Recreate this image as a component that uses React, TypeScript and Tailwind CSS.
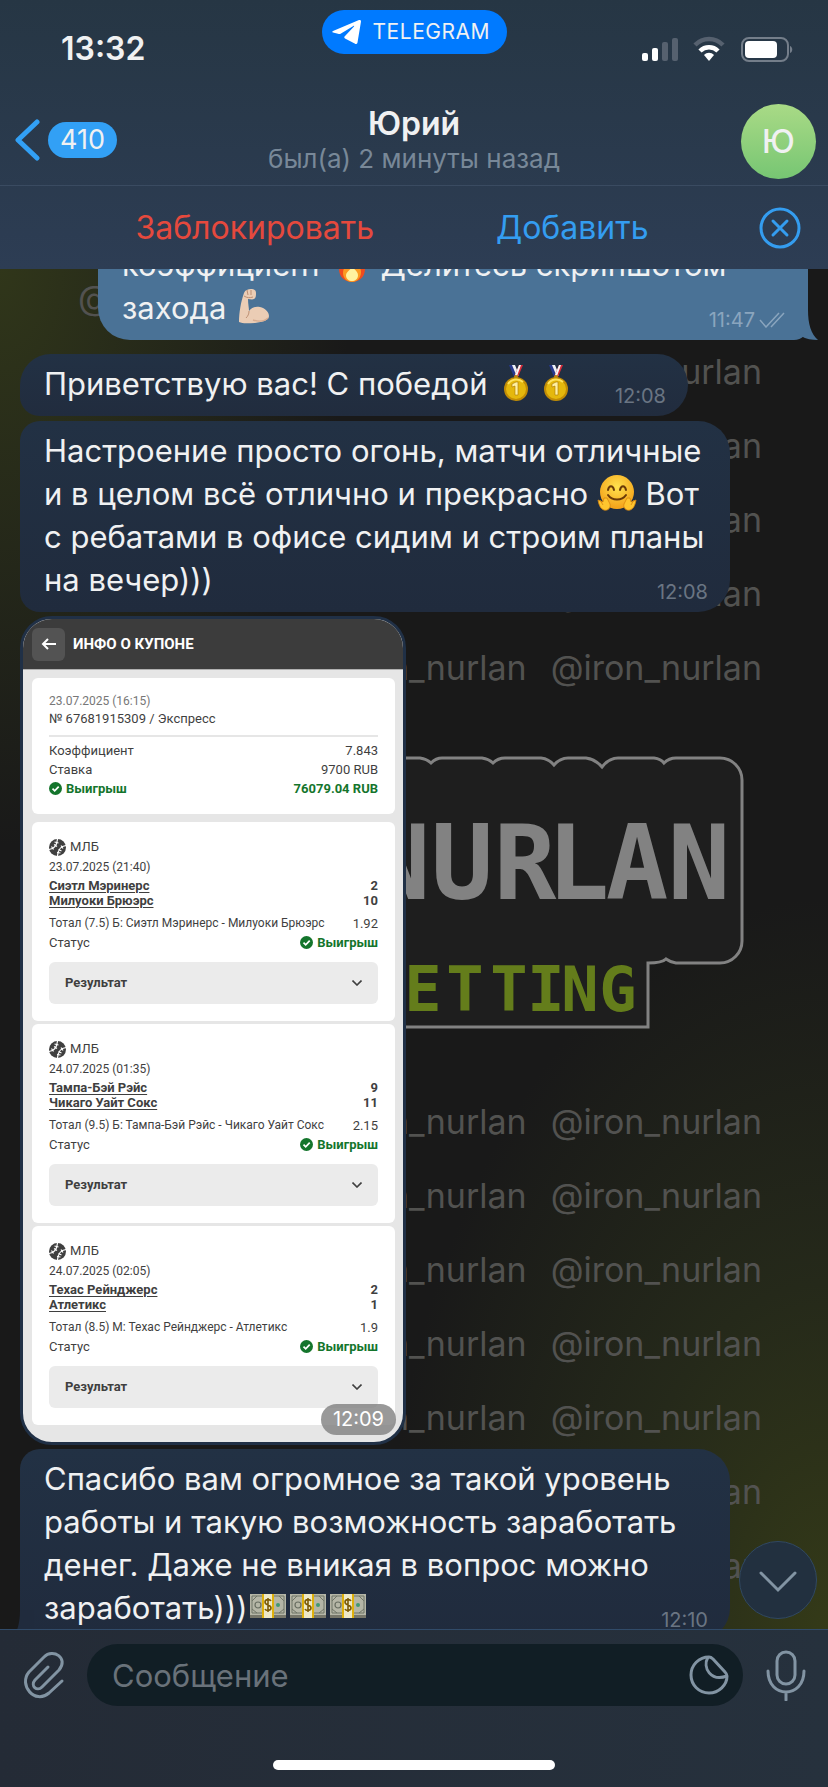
import type { ReactNode } from "react";

const matches = [
  {
    date: "23.07.2025 (21:40)",
    home: "Сиэтл Мэринерс",
    away: "Милуоки Брюэрс",
    homeScore: 2,
    awayScore: 10,
    bet: "Тотал (7.5) Б: Сиэтл Мэринерс - Милуоки Брюэрс",
    odds: "1.92",
  },
  {
    date: "24.07.2025 (01:35)",
    home: "Тампа-Бэй Рэйс",
    away: "Чикаго Уайт Сокс",
    homeScore: 9,
    awayScore: 11,
    bet: "Тотал (9.5) Б: Тампа-Бэй Рэйс - Чикаго Уайт Сокс",
    odds: "2.15",
  },
  {
    date: "24.07.2025 (02:05)",
    home: "Техас Рейнджерс",
    away: "Атлетикс",
    homeScore: 2,
    awayScore: 1,
    bet: "Тотал (8.5) М: Техас Рейнджерс - Атлетикс",
    odds: "1.9",
  },
];

const nameLetters = [
  { char: "N", x: 315 },
  { char: "U", x: 378 },
  { char: "R", x: 441 },
  { char: "L", x: 494 },
  { char: "A", x: 553 },
  { char: "N", x: 615 },
];

const bettingLetters = [
  { char: "E", x: 339 },
  { char: "T", x: 381 },
  { char: "T", x: 425 },
  { char: "I", x: 462 },
  { char: "N", x: 496 },
  { char: "G", x: 534 },
];

// how many handles stand in each wallpaper row, counted from the right edge
const rowsAboveLogo = [1, 1, 1, 1, 2];
const rowsBelowLogo = [2, 2, 2, 2, 2, 1, 1];

/* ---------- emoji ---------- */

function Flame() {
  return (
    <svg viewBox="0 0 40 40" className="inline-block size-10 align-[-8px]" role="img" aria-label="огонь">
      <path d="M20 2c2 7 13 13 13 23 0 8-6 13-13 13S7 33 7 25c0-6 3-8 4-12 2 1 3 3 4 5 4-4 6-9 5-16z" fill="#ee4b1f" />
      <path d="M20 13c1 5 9 8 9 15 0 6-4 10-9 10s-9-4-9-9c0-4 2-6 3-8l3 4c2-3 4-7 3-12z" fill="#fb9a22" />
      <path d="M20 22c1 3 6 5 6 9s-3 6-6 6-6-2-6-6c0-3 5-5 6-9z" fill="#fff2a0" />
    </svg>
  );
}

function Arm() {
  return (
    <svg viewBox="0 0 40 40" className="inline-block size-10 align-[-8px]" role="img" aria-label="сила">
      <path
        d="M4 35C4 26 6 14 9 6c1-3 4-4 7-4 3 0 5 1 5 4 0 2 0 5-2 6-2 1-4 0-6 0 0 5 1 9 1 12 3-4 7-5 11-4 5 1 9 5 9 9 0 4-6 6-14 7-6 0-12 1-16-1z"
        fill="#ebcdb5"
      />
      <path d="M14 24c0 3-1 5-3 7M12 3l1 5M16 3v5M9 9c3 2 6 2 9 1" fill="none" stroke="#bd8f73" strokeWidth="1" />
      <path d="M18 33c6 2 12 1 15-2" fill="none" stroke="#d8ac90" strokeWidth="1.5" />
    </svg>
  );
}

function Medal() {
  return (
    <svg viewBox="0 0 40 40" className="inline-block size-10 align-[-8px]" role="img" aria-label="медаль">
      <path d="M13 2h4l5 12h-4z" fill="#26398c" />
      <path d="M16 2h3l4 10-2 2z" fill="#eef0f5" />
      <path d="M27 2h-4l-5 12h4z" fill="#d62b3a" />
      <path d="M25 2h-2l-4 10 2 1z" fill="#f4f4f4" />
      <circle cx="20" cy="14" r="2" fill="#b98b10" />
      <circle cx="20" cy="26" r="12" fill="#c18c05" />
      <circle cx="20" cy="26" r="10" fill="#e5b80d" />
      <path d="M12 21a10 10 0 0 1 15-2" fill="none" stroke="#ffe35c" strokeWidth="2" />
      <path d="M16 21l4-2h2v13h-3v-9l-3 1z" fill="#fff0a0" stroke="#a87503" strokeWidth=".6" />
    </svg>
  );
}

function Hug() {
  return (
    <svg viewBox="0 0 40 40" className="inline-block size-10 align-[-8px]" role="img" aria-label="обнимаю">
      <defs>
        <radialGradient id="hugFace" cx=".5" cy=".35" r=".6">
          <stop offset="0" stopColor="#ffe24e" />
          <stop offset="1" stopColor="#f5a51c" />
        </radialGradient>
      </defs>
      <circle cx="20" cy="19" r="17" fill="url(#hugFace)" />
      <path d="M11 17c1-5 5-5 6 0M23 17c1-5 5-5 6 0" fill="none" stroke="#6b3a08" strokeWidth="2" strokeLinecap="round" />
      <path d="M11 22c4 6 14 6 18 0" fill="none" stroke="#6b3a08" strokeWidth="2" strokeLinecap="round" />
      <path d="M1 27l5 2 1-4 3 0 3 6c1 4-2 7-6 6-3-1-5-4-6-10z" fill="#ffc52e" stroke="#d9860f" strokeWidth=".8" />
      <path d="M39 27l-5 2-1-4-3 0-3 6c-1 4 2 7 6 6 3-1 5-4 6-10z" fill="#ffc52e" stroke="#d9860f" strokeWidth=".8" />
      <path d="M3 27l3 5M37 27l-3 5" stroke="#d9860f" strokeWidth=".8" />
    </svg>
  );
}

function Cash() {
  return (
    <svg viewBox="0 0 40 40" className="inline-block size-10 align-[-8px]" role="img" aria-label="деньги">
      <path d="M2 28h36v3H2z" fill="#77776a" />
      <path d="M2 7h36v21H2z" fill="#b5b6a6" />
      <path d="M4 9h32v17H4z" fill="none" stroke="#6f7566" strokeWidth="1" />
      <path d="M4 14l5-5M4 22l5 4M36 14l-5-5M36 22l-5 4" stroke="#6f7566" strokeWidth="1" />
      <circle cx="10" cy="18" r="3" fill="none" stroke="#686e61" strokeWidth="1.2" />
      <circle cx="30" cy="18" r="2" fill="#439871" />
      <path d="M14 7h12v24H14z" fill="#eee9c7" />
      <path d="M14 7h2v24h-2zM24 7h2v24h-2z" fill="#dfb10b" />
      <path
        d="M23 14c-1-2-6-2-6 1 0 4 6 2 6 6 0 3-5 3-6 1M20 11v14"
        fill="none"
        stroke="#7b5a08"
        strokeWidth="1.6"
      />
    </svg>
  );
}

/* ---------- header ---------- */

function StatusBar() {
  return (
    <div className="grid h-[98px] grid-cols-[1fr_185px_1fr] items-start">
      <time className="pt-[29px] pl-[61px] text-[32px] leading-10 font-semibold">13:32</time>

      <div className="mt-[10px] flex h-11 items-center gap-3 rounded-full bg-[#007aff] pl-[10px]">
        <svg viewBox="0 0 29 25" className="h-[25px] w-[29px] shrink-0 fill-white">
          <path d="M1 11 27 0c1-.4 2 .2 2 1.500l-3.500 21c-.3 1.500-1.500 2-2.800 1L13 18.500c-1-.7-1-1.500-.2-2.300L22 6.500c.4-.5 0-1-.6-.6L9 13.500c-1 .6-2 .6-3 .3L1 12.500c-1-.3-1-1 0-1.500z" />
        </svg>
        <span className="text-[21px] leading-6 tracking-wide">TELEGRAM</span>
      </div>

      <div className="flex justify-end gap-[14px] pt-[36px] pr-[35px]">
        <svg viewBox="0 0 38 26" className="h-[26px] w-[38px]">
          <rect x="1" y="17" width="6" height="8" rx="2" fill="#fff" />
          <rect x="11" y="12" width="6" height="13" rx="2" fill="#fff" />
          <rect x="21" y="6" width="6" height="19" rx="2" fill="#56616f" />
          <rect x="31" y="2" width="6" height="23" rx="2" fill="#56616f" />
        </svg>
        <svg viewBox="0 0 32 26" className="h-[26px] w-8">
          <path d="M2 9c8-8 20-8 28 0" fill="none" stroke="#56616f" strokeWidth="4.500" />
          <path d="M7 15c5-5 13-5 18 0" fill="none" stroke="#fff" strokeWidth="4.500" />
          <path d="M11 19c3-3 7-3 10 0l-5 6z" fill="#fff" />
        </svg>
        <svg viewBox="0 0 54 26" className="h-[26px] w-[54px]">
          <rect x="3" y="2" width="46" height="23" rx="7" fill="none" stroke="#747e8a" strokeWidth="2" />
          <rect x="6" y="5" width="32" height="17" rx="4" fill="#fff" />
          <path d="M51 10c3 1 3 6 0 7z" fill="#747e8a" />
        </svg>
      </div>
    </div>
  );
}

function ChatHeader() {
  return (
    <header className="shrink-0 bg-linear-to-b from-[#263644] to-[#2d3d54]">
      <StatusBar />

      <div className="grid h-[88px] grid-cols-[180px_1fr_180px] border-b border-[#3a4b61]">
        <a href="#chats" aria-label="Назад" className="flex items-center gap-2 pb-1 pl-[14px]">
          <svg viewBox="0 0 26 44" className="h-11 w-[26px]" fill="none" stroke="#32a0f5" strokeWidth="5" strokeLinecap="round" strokeLinejoin="round">
            <path d="M23 4 4 22l19 18" />
          </svg>
          <span className="rounded-full bg-[#32a0f5] px-3 text-[27px] leading-9">410</span>
        </a>

        <div className="text-center">
          <h1 className="pt-1.5 text-[32px] leading-10 font-semibold">Юрий</h1>
          <p className="text-[26px] leading-[30px] whitespace-nowrap text-[#788898]">был(а) 2 минуты назад</p>
        </div>

        <div className="flex justify-end pt-1.5 pr-3">
          <div className="flex size-[75px] items-center justify-center rounded-full bg-linear-to-b from-[#a9da86] to-[#76c673] text-[32px] font-medium">
            Ю
          </div>
        </div>
      </div>

      <div className="grid h-[83px] grid-cols-[96px_1fr_1fr_97px] items-center text-[32px]">
        <span />
        <button type="button" className="text-[#e5493d]">Заблокировать</button>
        <button type="button" className="text-[#349df0]">Добавить</button>
        <button type="button" aria-label="Закрыть" className="justify-self-center">
          <svg viewBox="0 0 42 42" className="size-[42px]" fill="none" stroke="#349df0" strokeWidth="3" strokeLinecap="round">
            <circle cx="21" cy="21" r="19" />
            <path d="m14 14 14 14M28 14 14 28" />
          </svg>
        </button>
      </div>
    </header>
  );
}

/* ---------- wallpaper ---------- */

function Handles({ rows }: { rows: number[] }) {
  return (
    <>
      {rows.map((count, row) => (
        <div key={row} className="flex h-[74px] items-center justify-end gap-6">
          {Array.from({ length: count }, (_, i) => (
            <span key={i}>@iron_nurlan</span>
          ))}
        </div>
      ))}
    </>
  );
}

function Wallpaper() {
  return (
    <div
      aria-hidden="true"
      className="h-0 min-h-full overflow-hidden bg-[#191919] bg-[radial-gradient(ellipse_at_0%_0%,#30361a_0%,transparent_30%),radial-gradient(ellipse_at_100%_100%,#343a18_0%,#25291a_18%,transparent_38%)] text-[34px] text-[#525250] [grid-area:1/1]"
    >
      <div className="mr-[66px] ml-[78px]">
        <div className="-mt-[9px] flex h-[74px] items-center">@iron_nurlan</div>
        <Handles rows={rowsAboveLogo} />
      </div>

      <svg viewBox="0 0 660 274" className="mx-auto mt-[52px] mb-[54px] block h-[274px] w-[660px]">
        <path
          d="M24 2H336Q343 3 347 7Q352 2 358 2H398Q405 3 409 7Q414 2 421 2H457Q465 3 470 9Q476 2 484 2H502Q511 3 518 11Q525 2 534 2H570Q577 3 580 7Q585 2 592 2H636A22 22 0 0 1 658 24V185A22 22 0 0 1 636 207H592Q586 206 582 203Q578 207 564 207V271H96V207H24A22 22 0 0 1 2 185V24A22 22 0 0 1 24 2Z"
          fill="#1e1e1e"
          stroke="#828282"
          strokeWidth="3"
        />
        {nameLetters.map((letter) => (
          <text
            key={letter.x}
            x={letter.x}
            y="143"
            textAnchor="middle"
            className="fill-[#828282] font-['DejaVu_Sans_Mono',monospace] text-[104px] font-bold"
          >
            {letter.char}
          </text>
        ))}
        {bettingLetters.map((letter) => (
          <text
            key={letter.x}
            x={letter.x}
            y="255"
            textAnchor="middle"
            className="fill-[#647d1b] font-['DejaVu_Sans_Mono',monospace] text-[62px] font-bold"
          >
            {letter.char}
          </text>
        ))}
      </svg>

      <div className="mr-[66px] ml-[78px]">
        <Handles rows={rowsBelowLogo} />
      </div>
    </div>
  );
}

/* ---------- messages ---------- */

type BubbleProps = {
  children: ReactNode;
  time: ReactNode;
  className: string;
};

function Bubble({ children, time, className }: BubbleProps) {
  return (
    <article className={`relative grid max-w-full ${className}`}>
      <p className="px-6 pt-2 pb-[11px] text-[31px] leading-[43px] whitespace-pre [grid-area:1/1]">
        {children}
      </p>
      <div className="flex items-center gap-1 self-end justify-self-end pr-[22px] pb-2 text-[20px] leading-6 [grid-area:1/1]">
        {time}
      </div>
    </article>
  );
}

function WinBadge() {
  return (
    <span className="flex items-center gap-1 font-bold text-[#14752c]">
      <svg viewBox="0 0 13 13" className="size-[13px]">
        <circle cx="6.500" cy="6.500" r="6.500" fill="#14752c" />
        <path d="m3.500 6.700 2.200 2.200 4-4.300" fill="none" stroke="#fff" strokeWidth="1.700" />
      </svg>
      Выигрыш
    </span>
  );
}

function BaseballIcon() {
  return (
    <svg viewBox="0 0 17 17" className="size-[17px]">
      <circle cx="8.500" cy="8.500" r="8.500" fill="#3f3f3f" />
      <g fill="none" stroke="#fff" strokeWidth="1.200">
        <path d="M0 10.500C5 10 8 6 8.500 0M8.500 17C9 11 12 7 17 6.500" />
        <path d="m2.500 7.500 2 3M5 5.500l3 2M5.500 3l4 1M8 13.500l3.500.500M9.500 10.500l3 1.500M12 6.500l2 3" />
      </g>
    </svg>
  );
}

function MatchCard({ match }: { match: (typeof matches)[number] }) {
  return (
    <section className="rounded-md bg-white px-[17px] pt-4 pb-[17px]">
      <div className="flex h-[18px] items-center gap-1">
        <BaseballIcon />
        МЛБ
      </div>
      <p className="pt-0.5 text-[12px] leading-[18px]">{match.date}</p>

      <div className="flex justify-between pt-0.5 leading-[15px] font-bold">
        <div className="flex flex-col">
          <a href="#home" className="underline underline-offset-2">{match.home}</a>
          <a href="#away" className="underline underline-offset-2">{match.away}</a>
        </div>
        <div className="text-right">
          <p>{match.homeScore}</p>
          <p>{match.awayScore}</p>
        </div>
      </div>

      <div className="flex justify-between pt-1.5 leading-[19px] whitespace-nowrap">
        <span className="text-[12px]">{match.bet}</span>
        <span>{match.odds}</span>
      </div>
      <div className="flex justify-between leading-[19px]">
        <span>Статус</span>
        <WinBadge />
      </div>

      <button
        type="button"
        className="mt-[10px] flex h-[42px] w-full items-center justify-between rounded-md bg-[#ebebeb] px-4 font-bold"
      >
        Результат
        <svg viewBox="0 0 10 6" className="h-1.5 w-[10px]" fill="none" stroke="#3f3f3f" strokeWidth="1.600">
          <path d="m.5.5 4.500 4.500L9.500.5" />
        </svg>
      </button>
    </section>
  );
}

function Coupon() {
  return (
    <article className="relative mb-1 w-[386px] max-w-full overflow-hidden rounded-[32px] border-3 border-[#203046] bg-[#e6e6e6] font-['Roboto',sans-serif] text-[13px] text-[#3f3f3f]">
      <div className="flex h-[51px] items-center gap-2 border-b border-[#b0b0b0] bg-[#3c3c3c] pl-[9px] text-white">
        <button type="button" aria-label="Назад" className="flex size-[33px] items-center justify-center rounded-md bg-[#535353]">
          <svg viewBox="0 0 15 12" className="h-3 w-[15px]" fill="none" stroke="#fff" strokeWidth="2">
            <path d="M15 6H2M7 1 2 6l5 5" />
          </svg>
        </button>
        <h2 className="text-[15px] font-bold">ИНФО О КУПОНЕ</h2>
      </div>

      <div className="pt-2 pr-2 pb-[17px] pl-[9px]">
        <section className="mb-2 rounded-md bg-white px-[17px] pt-[14px] pb-4">
          <p className="text-[12px] leading-[18px] text-[#777]">23.07.2025 (16:15)</p>
          <p className="border-b-2 border-[#e6e6e6] pb-[7px] leading-[18px]">№ 67681915309 / Экспресс</p>
          <div className="flex justify-between pt-1 leading-[19px]">
            <span>Коэффициент</span>
            <span>7.843</span>
          </div>
          <div className="flex justify-between leading-[19px]">
            <span>Ставка</span>
            <span>9700 RUB</span>
          </div>
          <div className="flex justify-between leading-[19px]">
            <WinBadge />
            <span className="font-bold text-[#14752c]">76079.04 RUB</span>
          </div>
        </section>

        <div className="flex flex-col gap-[3px]">
          {matches.map((match) => (
            <MatchCard key={match.date} match={match} />
          ))}
        </div>
      </div>

      <time className="absolute right-[7px] bottom-[7px] rounded-full bg-[#7f7f7f]/80 px-3 font-['Inter',sans-serif] text-[20px] leading-[31px] text-white">
        12:09
      </time>
    </article>
  );
}

function Messages() {
  return (
    <div className="-mt-[34px] px-5 [grid-area:1/1]">
      <Bubble
        className="mb-[14px] ml-auto w-[710px] rounded-l-[32px] rounded-tr-[32px] rounded-br-[14px] bg-[#4a7296]"
        time={
          <>
            <time className="text-[#8aa5be]">11:47</time>
            <svg viewBox="0 0 27 16" className="h-4 w-[27px]" fill="none" stroke="#8aa5be" strokeWidth="1.500">
              <path d="m1 8 6 7L20 1M12 15 25 1" />
            </svg>
            <svg viewBox="0 0 30 30" className="absolute -right-[10px] bottom-0 size-[30px] fill-[#4a7296]">
              <path d="M20 0c0 14 3 24 10 30-6 0-12-1-17-4L6 20V0z" />
            </svg>
          </>
        }
      >
        {"коэффициент "}
        <Flame />
        {" Делитесь скриншотом\nзахода "}
        <Arm />
      </Bubble>

      <Bubble
        className="mb-[5px] w-[668px] rounded-[32px] rounded-bl-[20px] bg-linear-to-b from-[#223144] to-[#212c3e]"
        time={<time className="text-[#6a7583]">12:08</time>}
      >
        {"Приветствую вас! С победой "}
        <Medal />
        <Medal />
      </Bubble>

      <Bubble
        className="mb-1 w-[710px] rounded-l-[20px] rounded-r-[32px] bg-linear-to-b from-[#223144] to-[#202b3d]"
        time={<time className="text-[#6a7583]">12:08</time>}
      >
        {"Настроение просто огонь, матчи отличные\nи в целом всё отлично и прекрасно "}
        <Hug />
        {" Вот\nс ребатами в офисе сидим и строим планы\nна вечер)))"}
      </Bubble>

      <Coupon />

      <Bubble
        className="w-[710px] rounded-r-[32px] rounded-tl-[20px] rounded-bl-[14px] bg-linear-to-b from-[#223144] to-[#202b3d]"
        time={
          <>
            <time className="text-[#6a7583]">12:10</time>
            <svg viewBox="0 0 30 30" className="absolute bottom-0 -left-[10px] size-[30px] fill-[#202b3d]">
              <path d="M10 0c0 14-3 24-10 30 6 0 12-1 17-4l7-6V0z" />
            </svg>
          </>
        }
      >
        {"Спасибо вам огромное за такой уровень\nработы и такую возможность заработать\nденег. Даже не вникая в вопрос можно\nзаработать)))"}
        <Cash />
        <Cash />
        <Cash />
      </Bubble>
    </div>
  );
}

/* ---------- composer ---------- */

function Composer() {
  return (
    <footer className="h-[158px] shrink-0 border-t border-[#314b69] bg-linear-to-r from-[#242b36] to-[#26313d] pt-[14px]">
      <form className="flex items-center">
        <button type="button" aria-label="Прикрепить" className="flex w-[87px] shrink-0 justify-center">
          <svg viewBox="0 0 42 48" className="h-12 w-[42px]" fill="none" stroke="#8294a3" strokeWidth="3" strokeLinecap="round" strokeLinejoin="round">
            <path d="M25 16 12 29c-5 6 2 12 7 7l17-17c10-12-6-22-15-13L6 21C-5 34 12 54 26 42l13-12" />
          </svg>
        </button>

        <label className="flex h-[62px] min-w-0 flex-1 items-center rounded-full bg-[#111e25] pr-[14px] pl-[25px]">
          <input
            type="text"
            aria-label="Сообщение"
            placeholder="Сообщение"
            className="h-12 min-w-0 flex-1 bg-transparent text-[31px] outline-none placeholder:text-[#69727a]"
          />
          <svg viewBox="0 0 40 40" className="size-10" fill="none" stroke="#8294a3" strokeWidth="3" strokeLinejoin="round">
            <path d="M20 2C10 2 2 10 2 20s8 18 18 18 18-8 18-17c0-2-1-3-2-4L24 4c-1-1-2-2-4-2z" />
            <path d="M19 2c-6 11 3 25 19 19" />
          </svg>
        </label>

        <button type="button" aria-label="Голосовое сообщение" className="flex w-[85px] shrink-0 justify-center">
          <svg viewBox="0 0 40 52" className="h-[52px] w-10" fill="none" stroke="#8294a3" strokeWidth="3" strokeLinecap="round">
            <rect x="11" y="3" width="18" height="32" rx="9" />
            <path d="M2 22c0 28 36 28 36 0M20 43v8" />
          </svg>
        </button>
      </form>

      <div className="mx-auto mt-[54px] h-[10px] w-[282px] rounded-full bg-white" />
    </footer>
  );
}

export default function App() {
  return (
    <div className="flex h-screen flex-col overflow-hidden bg-[#191919] font-['Inter',sans-serif] text-[#f0f1f2]">
      <ChatHeader />

      <main className="relative grid min-h-0 flex-1 grid-cols-1 grid-rows-[minmax(0,1fr)] overflow-hidden">
        <Wallpaper />
        <Messages />

        <button
          type="button"
          aria-label="Вниз"
          className="absolute right-[11px] bottom-[10px] flex size-[78px] items-center justify-center rounded-full border border-[#304862] bg-[#22303f]"
        >
          <svg viewBox="0 0 38 22" className="mt-1 h-[22px] w-[38px]" fill="none" stroke="#8294a3" strokeWidth="3" strokeLinecap="round">
            <path d="m2 2 17 17L36 2" />
          </svg>
        </button>
      </main>

      <Composer />
    </div>
  );
}
